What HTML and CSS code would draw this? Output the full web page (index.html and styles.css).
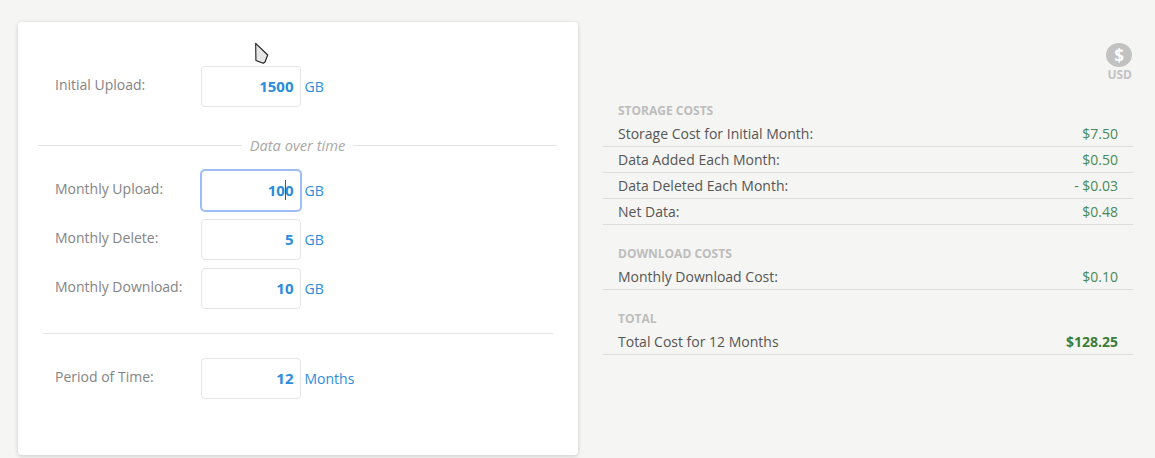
FILE: index.html
```html
<!DOCTYPE html>
<html lang="en">
<head>
<meta charset="utf-8">
<title>Cost calculator</title>
<link rel="stylesheet" href="styles.css">
</head>
<body>
<main class="page">
  <section class="card">
    <div class="row row-first">
      <label class="label">Initial Upload:</label>
      <div class="box"><input class="input" value="1500"></div>
      <span class="unit">GB</span>
    </div>
    <div class="divider"><span class="divider-text">Data over time</span></div>
    <div class="row">
      <label class="label">Monthly Upload:</label>
      <div class="box"><input class="input input-focus" value="100"><span class="caret"></span></div>
      <span class="unit">GB</span>
    </div>
    <div class="row">
      <label class="label">Monthly Delete:</label>
      <div class="box"><input class="input" value="5"></div>
      <span class="unit">GB</span>
    </div>
    <div class="row">
      <label class="label">Monthly Download:</label>
      <div class="box"><input class="input" value="10"></div>
      <span class="unit">GB</span>
    </div>
    <hr class="rule">
    <div class="row">
      <label class="label">Period of Time:</label>
      <div class="box"><input class="input" value="12"></div>
      <span class="unit">Months</span>
    </div>
    <svg class="pointer" width="15" height="24" viewBox="0 0 15 24">
      <path d="M0.700 1.300 L0.900 18.500 L8.300 21.300 L10 20 L12.700 13 Z" fill="#e6e6e6" stroke="#1c1c1c" stroke-width="1.100" stroke-linejoin="round"/>
    </svg>
  </section>
  <aside class="summary">
    <div class="currency">
      <span class="coin">$</span>
      <span class="code">USD</span>
    </div>
    <h2 class="heading">Storage Costs</h2>
    <div class="line"><span>Storage Cost for Initial Month:</span><span class="amount">$7.50</span></div>
    <div class="line"><span>Data Added Each Month:</span><span class="amount">$0.50</span></div>
    <div class="line"><span>Data Deleted Each Month:</span><span class="amount">- $0.03</span></div>
    <div class="line"><span>Net Data:</span><span class="amount">$0.48</span></div>
    <h2 class="heading heading-gap">Download Costs</h2>
    <div class="line"><span>Monthly Download Cost:</span><span class="amount">$0.10</span></div>
    <h2 class="heading heading-gap">Total</h2>
    <div class="line"><span>Total Cost for 12 Months</span><span class="amount amount-total">$128.25</span></div>
  </aside>
</main>
</body>
</html>
```
FILE: styles.css
```css
* { box-sizing: border-box; }
html, body { margin: 0; height: 100%; overflow: hidden; }
body {
  background: #f5f5f3;
  font-family: "Open Sans", sans-serif;
  font-size: 14px;
  color: #555;
}
.page {
  display: flex;
  align-items: flex-start;
  padding: 22px 22px 0 18px;
  gap: 25px;
}
.card {
  position: relative;
  flex: 0 0 560px;
  height: 433px;
  background: #fff;
  border-radius: 4px;
  box-shadow: 0 1px 4px rgba(0, 0, 0, 0.18);
  padding: 44px 21px 0 20px;
}
.row {
  display: flex;
  align-items: flex-start;
  height: 41px;
  margin-bottom: 8px;
  padding-left: 17px;
}
.label {
  flex: 0 0 146px;
  padding-top: 9px;
  line-height: 19px;
  color: #848484;
}
.box { position: relative; flex: 0 0 100px; height: 41px; }
.input {
  display: block;
  width: 100%;
  height: 41px;
  padding: 0 6.500px 2px 0;
  border: 1px solid #e6e6e6;
  border-radius: 4px;
  background: #fff;
  font: 700 15px "Open Sans", sans-serif;
  color: #2b8ddb;
  text-align: right;
  outline: none;
}
.input-focus { border-color: #9dbdf5; box-shadow: 0 0 0 1px #9dbdf5; }
.caret {
  position: absolute;
  left: 84px;
  top: 10px;
  width: 1px;
  height: 20px;
  background: #1f5f9e;
}
.unit {
  margin-left: 3.500px;
  padding-top: 11px;
  line-height: 19px;
  color: #2b8ddb;
}
.divider {
  display: flex;
  align-items: center;
  justify-content: center;
  gap: 8px;
  margin-top: 28px;
  margin-bottom: 15px;
  height: 20px;
  font-size: 14.700px;
  font-style: italic;
  color: #a8a8a8;
}
.divider::before, .divider::after {
  content: "";
  flex: 1;
  height: 1px;
  background: #e4e4e4;
}
.rule {
  height: 1px;
  margin: 24px 4px 24px 5px;
  border: 0;
  background: #e4e4e4;
}
.pointer { position: absolute; left: 237px; top: 20px; }
.summary { flex: 1; min-width: 0; }
.currency {
  display: flex;
  flex-direction: column;
  align-items: flex-end;
  height: 60px;
  padding-top: 21px;
}
.coin {
  display: flex;
  align-items: center;
  justify-content: center;
  width: 26px;
  height: 26px;
  margin-right: 1px;
  border-radius: 50%;
  background: #c2c2c2;
  color: #fff;
  font-size: 17px;
  font-weight: 700;
  line-height: 1;
}
.code {
  margin: 1px 1px 0 0;
  font-size: 12px;
  font-weight: 700;
  line-height: 14px;
  color: #c2c2c2;
}
.heading {
  margin: 20px 0 0;
  padding: 0 0 2px 15px;
  font-size: 12px;
  font-weight: 700;
  line-height: 17px;
  text-transform: uppercase;
  color: #bdbdbd;
}
.heading-gap { margin-top: 20px; }
.line {
  display: flex;
  justify-content: space-between;
  height: 26px;
  padding: 3px 15px 0;
  border-bottom: 1px solid #dedede;
  line-height: 19px;
  color: #555;
}
.amount { color: #4a8a5a; }
.amount-total { font-weight: 700; color: #3b7d3b; }
```
